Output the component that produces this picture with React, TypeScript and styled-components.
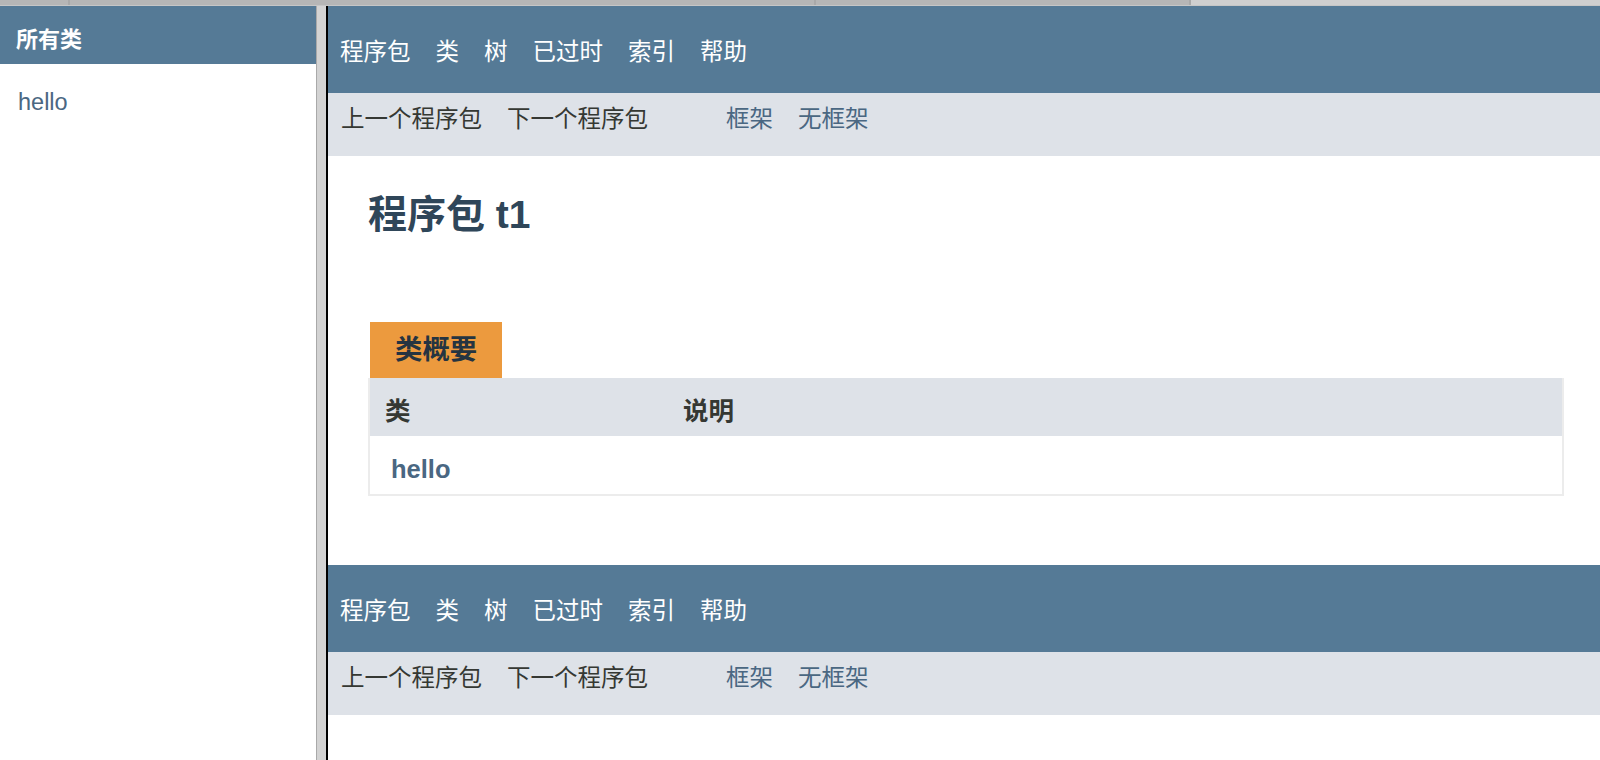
import { createGlobalStyle, styled } from "styled-components";

const GlobalStyle = createGlobalStyle`
  html, body {
    margin: 0;
    padding: 0;
    background: #ffffff;
    overflow: hidden;
  }
  body {
    font-family: "Liberation Sans", "Noto Sans CJK SC", sans-serif;
  }
`;

const Page = styled.div`
  display: flex;
  flex-direction: column;
  width: 1600px;
  height: 760px;
`;

const Chrome = styled.div`
  display: flex;
  height: 5px;
  border-bottom: 1px solid #c6c6c6;
  background: #b6b6b6;
`;

const ChromeTab = styled.div<{ $w?: number; $light?: boolean }>`
  width: ${(p) => (p.$w ? `${p.$w}px` : "auto")};
  flex: ${(p) => (p.$w ? "none" : "1")};
  background: ${(p) => (p.$light ? "#cfcfcf" : "#b6b6b6")};
  border-right: 2px solid #a9a9a9;
  &:last-child {
    border-right: none;
  }
`;

const Frames = styled.div`
  display: flex;
  flex: 1;
  min-height: 0;
`;

const Sidebar = styled.div`
  width: 316px;
  flex: none;
  background: #ffffff;
`;

const SideBar = styled.div`
  height: 58px;
  box-sizing: border-box;
  padding: 19px 0 0 16px;
  background: #557a96;
  color: #ffffff;
  font-size: 22px;
  font-weight: bold;
  line-height: 30px;
`;

const SideList = styled.ul`
  list-style: none;
  margin: 23px 0 0;
  padding: 0 0 0 18px;
  font-size: 23.5px;
  line-height: 30px;
`;

const SideLink = styled.a`
  color: #4a6782;
  text-decoration: none;
`;

const Splitter = styled.div`
  width: 9px;
  flex: none;
  background: #d3d3d3;
  border-left: 1px solid #a9a9a9;
  border-right: 2px solid #000000;
`;

const Main = styled.div`
  flex: 1;
  display: flex;
  flex-direction: column;
  min-width: 0;
`;

const TopNav = styled.ul`
  display: flex;
  gap: 25px;
  height: 87px;
  box-sizing: border-box;
  margin: 0;
  padding: 31px 0 0 12px;
  list-style: none;
  background: #557a96;
  color: #ffffff;
  font-size: 23.5px;
  line-height: 30px;
`;

const SubNav = styled.div`
  display: flex;
  height: 63px;
  box-sizing: border-box;
  padding: 11px 0 0 13px;
  background: #dee2e8;
  font-size: 23.5px;
  line-height: 30px;
`;

const NavList = styled.ul<{ $offset?: number }>`
  display: flex;
  gap: 25px;
  margin: 0 0 0 ${(p) => p.$offset ?? 0}px;
  padding: 0;
  list-style: none;
  color: #353833;
`;

const NavLink = styled.li`
  color: #4a6782;
`;

const Content = styled.div`
  padding: 36px 36px 69px 40px;
`;

const Title = styled.h1`
  margin: 0 0 84px;
  color: #2f4659;
  font-size: 39px;
  font-weight: bold;
  line-height: 46px;
`;

const Caption = styled.div`
  display: inline-block;
  margin-left: 2px;
  padding: 13px 25px;
  background: #ec9a3e;
  color: #253441;
  font-size: 27.4px;
  font-weight: bold;
  line-height: 30px;
`;

const Table = styled.div`
  border: 2px solid #ececec;
  border-top: none;
`;

const Row = styled.div<{ $head?: boolean }>`
  display: grid;
  grid-template-columns: 25% 1fr;
  height: 58px;
  box-sizing: border-box;
  padding-top: 18px;
  background: ${(p) => (p.$head ? "#dee2e8" : "#ffffff")};
  color: #353833;
  font-size: 25.5px;
  font-weight: bold;
  line-height: 30px;
`;

const Cell = styled.div<{ $pad?: number }>`
  padding-left: ${(p) => p.$pad ?? 15}px;
`;

const ClassLink = styled.span`
  color: #4a6782;
`;

const topItems = ["程序包", "类", "树", "已过时", "索引", "帮助"];

function Navigation() {
  return (
    <>
      <TopNav>
        {topItems.map((t) => (
          <li key={t}>{t}</li>
        ))}
      </TopNav>
      <SubNav>
        <NavList>
          <li>上一个程序包</li>
          <li>下一个程序包</li>
        </NavList>
        <NavList $offset={78}>
          <NavLink>框架</NavLink>
          <NavLink>无框架</NavLink>
        </NavList>
      </SubNav>
    </>
  );
}

export default function App() {
  return (
    <Page>
      <GlobalStyle />
      <Chrome>
        <ChromeTab $w={68} />
        <ChromeTab $w={744} />
        <ChromeTab $w={373} />
        <ChromeTab $light />
      </Chrome>
      <Frames>
        <Sidebar>
          <SideBar>所有类</SideBar>
          <SideList>
            <li>
              <SideLink href="#">hello</SideLink>
            </li>
          </SideList>
        </Sidebar>
        <Splitter />
        <Main>
          <Navigation />
          <Content>
            <Title>程序包 t1</Title>
            <Caption>类概要</Caption>
            <Table>
              <Row $head>
                <Cell>类</Cell>
                <Cell>说明</Cell>
              </Row>
              <Row>
                <Cell $pad={21}>
                  <ClassLink>hello</ClassLink>
                </Cell>
                <Cell />
              </Row>
            </Table>
          </Content>
          <Navigation />
        </Main>
      </Frames>
    </Page>
  );
}
